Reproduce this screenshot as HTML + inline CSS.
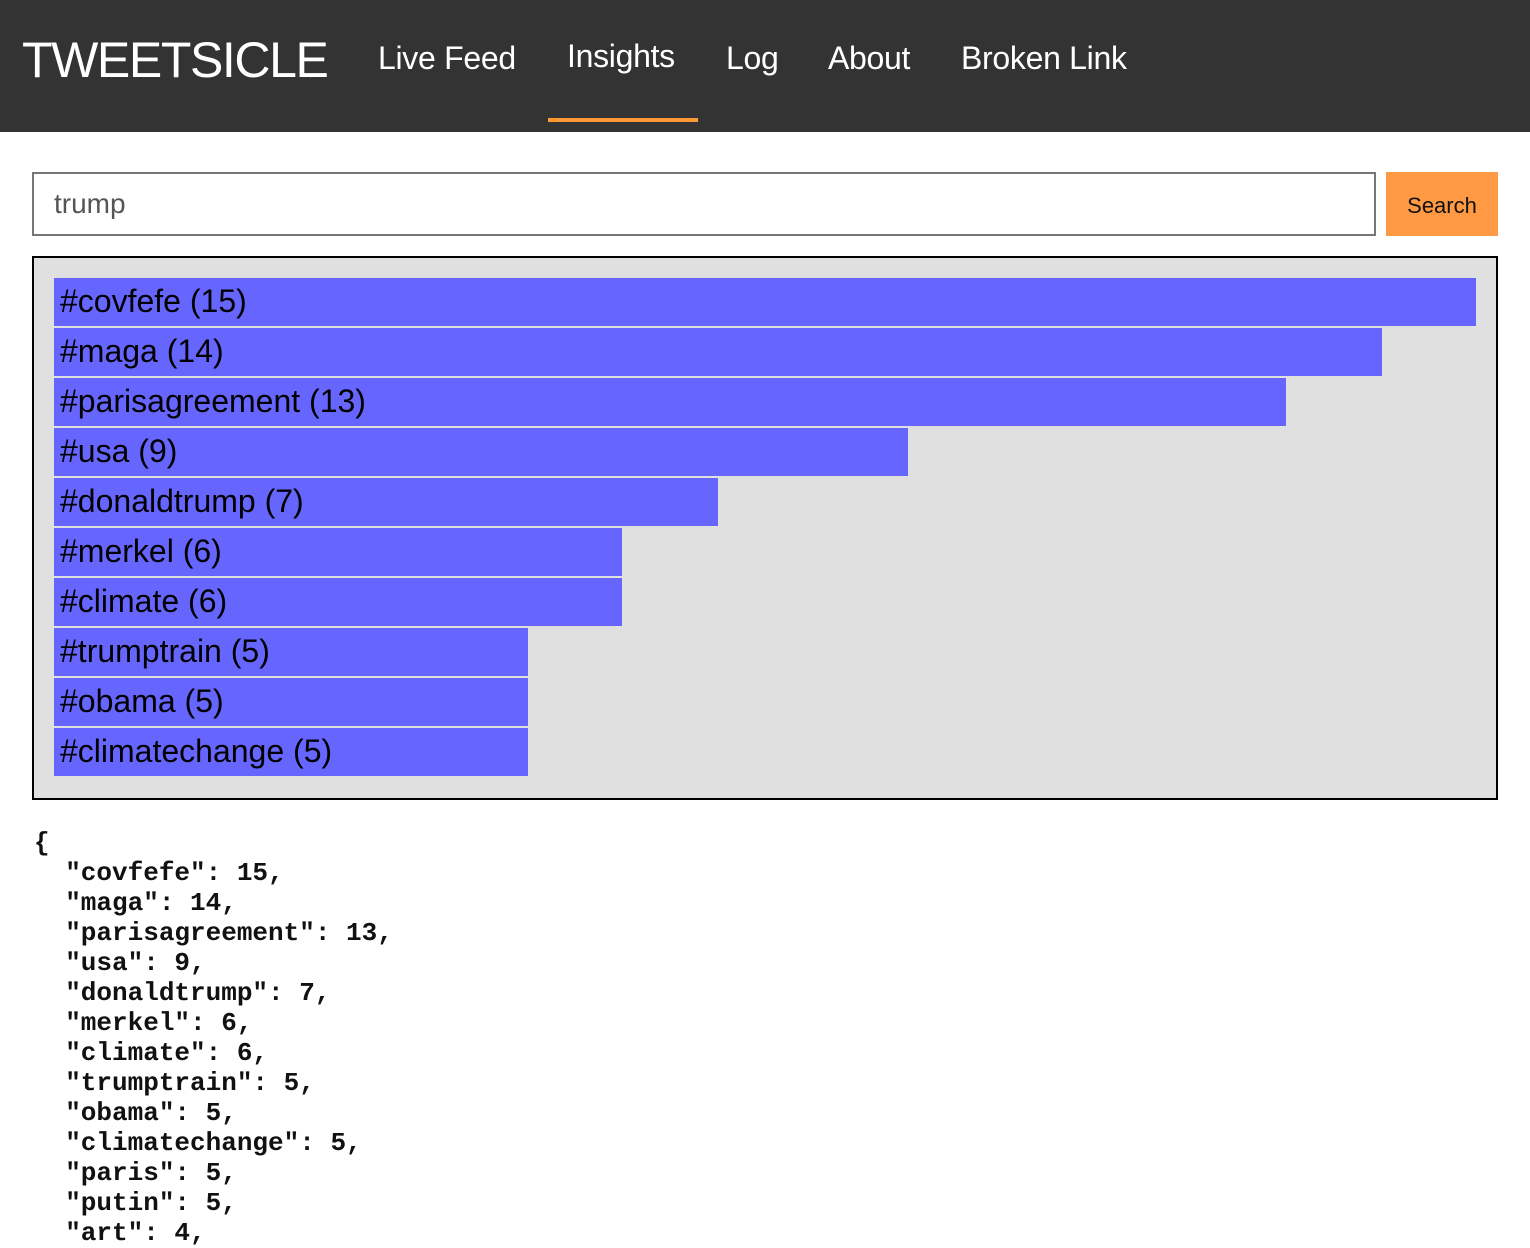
<!DOCTYPE html>
<html><head><style>
*{margin:0;padding:0;box-sizing:border-box}
body{width:1530px;height:1244px;overflow:hidden;background:#fff;font-family:"Liberation Sans",Arial,sans-serif}
.nav{height:132px;background:#333;position:relative;color:#fff}
.nav span{position:absolute;white-space:nowrap}
.brand{left:22px;top:31px;font-size:50px;letter-spacing:-1.4px}
.l{top:40px;font-size:32px;letter-spacing:-0.3px}
.ul{position:absolute;left:548px;top:118px;width:150px;height:4px;background:#f93}
.inp{position:absolute;left:32px;top:172px;width:1344px;height:64px;border:2px solid #777;font-size:28px;color:#555;padding:14px 0 0 20px}
.btn{position:absolute;left:1386px;top:172px;width:112px;height:64px;background:#f94;font-size:22px;color:#111;text-align:center;line-height:68px}
.box{position:absolute;left:32px;top:256px;width:1466px;height:544px;border:2px solid #000;background:#e0e0e0}
.bar{position:absolute;left:20px;height:48px;background:#66f;font-size:32px;color:#000;padding-left:6px;line-height:46px;white-space:nowrap}
pre{position:absolute;left:34px;top:828px;font-family:"Liberation Mono","Courier New",monospace;font-weight:bold;font-size:26px;line-height:30px;color:#111}
</style></head><body>
<div class="nav">
<span class="brand">TWEETSICLE</span>
<span class="l" style="left:378px">Live Feed</span>
<span class="l" style="left:567px;top:38px">Insights</span>
<span class="l" style="left:726px">Log</span>
<span class="l" style="left:828px">About</span>
<span class="l" style="left:961px">Broken Link</span>
<div class="ul"></div>
</div>
<div class="inp">trump</div>
<div class="btn">Search</div>
<div class="box">
<div class="bar" style="top:20px;width:1422px">#covfefe (15)</div>
<div class="bar" style="top:70px;width:1328px">#maga (14)</div>
<div class="bar" style="top:120px;width:1232px">#parisagreement (13)</div>
<div class="bar" style="top:170px;width:854px">#usa (9)</div>
<div class="bar" style="top:220px;width:664px">#donaldtrump (7)</div>
<div class="bar" style="top:270px;width:568px">#merkel (6)</div>
<div class="bar" style="top:320px;width:568px">#climate (6)</div>
<div class="bar" style="top:370px;width:474px">#trumptrain (5)</div>
<div class="bar" style="top:420px;width:474px">#obama (5)</div>
<div class="bar" style="top:470px;width:474px">#climatechange (5)</div>
</div>
<pre>{
  "covfefe": 15,
  "maga": 14,
  "parisagreement": 13,
  "usa": 9,
  "donaldtrump": 7,
  "merkel": 6,
  "climate": 6,
  "trumptrain": 5,
  "obama": 5,
  "climatechange": 5,
  "paris": 5,
  "putin": 5,
  "art": 4,</pre>
</body></html>
